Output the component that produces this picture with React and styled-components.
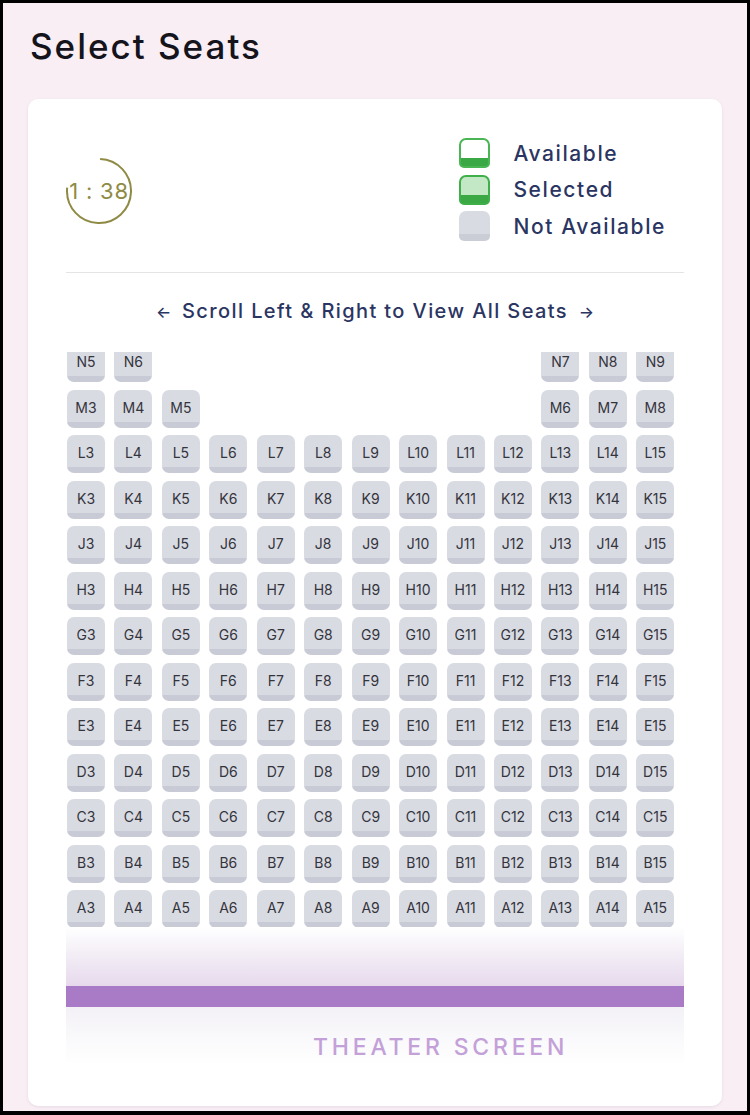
import React from "react";
import styled, { createGlobalStyle } from "styled-components";

const Global = createGlobalStyle`
  html, body { margin: 0; padding: 0; background: #000; }
  * { box-sizing: border-box; }
  body { font-family: "Inter", "Noto Sans", sans-serif; }
`;

const Frame = styled.div`
  width: 750px;
  height: 1115px;
  border: 3px solid #000;
  border-bottom-width: 4px;
  background: #f8eef4;
  display: flex;
  flex-direction: column;
  overflow: hidden;
`;

const Title = styled.h1`
  margin: 21px 0 0 27px;
  font-size: 35px;
  line-height: 44px;
  font-weight: 500;
  color: #15141c;
  letter-spacing: 2px;
`;

const Card = styled.div`
  margin: 31px 25px 0;
  height: 1007px;
  background: #fff;
  border-radius: 10px;
  box-shadow: 0 1px 3px rgba(120, 90, 120, 0.12);
  padding: 38px 38px 40px;
  display: flex;
  flex-direction: column;
`;

const Header = styled.div`
  height: 103px;
  display: flex;
  align-items: center;
  justify-content: space-between;
  padding-right: 18px;
`;

const Timer = styled.div`
  display: grid;
  width: 66px;
  height: 66px;
  margin-top: 5px;
  & > * { grid-area: 1 / 1; }
`;

const TimerText = styled.span`
  align-self: center;
  justify-self: center;
  font-size: 22px;
  letter-spacing: 0.8px;
  color: #8f8b45;
  font-weight: 400;
  white-space: nowrap;
`;

const Legend = styled.div`
  display: flex;
  flex-direction: column;
  gap: 6.5px;
  margin-top: 2px;
`;

const LegendRow = styled.div`
  display: flex;
  align-items: center;
  gap: 23px;
  height: 30px;
`;

const LegendBox = styled.div`
  width: 31px;
  height: 30px;
  border-radius: 7px 7px 5px 5px;
  ${({ $kind }) =>
    $kind === "available"
      ? `background: linear-gradient(#fff 0, #fff 70%, #3aa845 70%); border: 2px solid #49b553;`
      : $kind === "selected"
      ? `background: linear-gradient(#c2e8c5 0, #c2e8c5 70%, #3aa845 70%); border: 2px solid #3eaf49;`
      : `background: linear-gradient(#d9dbe3 0, #d9dbe3 78%, #cbcdd6 78%);`}
`;

const LegendLabel = styled.span`
  font-size: 21px;
  font-weight: 500;
  letter-spacing: 1.6px;
  color: #2b3562;
`;

const Divider = styled.div`
  height: 1px;
  background: #e4e4e6;
  margin-top: 32px;
`;

const Hint = styled.div`
  margin-top: 23px;
  text-align: center;
  font-size: 20px;
  line-height: 30px;
  font-weight: 500;
  letter-spacing: 1.4px;
  color: #2b3562;
`;

const Arrow = styled.span`
  font-size: 16px;
  letter-spacing: 0;
  margin: 0 4px;
`;

const Viewport = styled.div`
  margin-top: 25px;
  height: 575px;
  overflow: hidden;
`;

const Grid = styled.div`
  margin-top: -8px;
  margin-left: 1px;
  display: grid;
  grid-template-columns: repeat(13, 38px);
  grid-auto-rows: 38px;
  column-gap: 9.45px;
  row-gap: 7.5px;
`;

const Seat = styled.div`
  grid-column: ${({ $col }) => $col};
  border-radius: 7px;
  background: linear-gradient(#d9dbe3 0, #d9dbe3 85%, #c8cbd5 85%);
  display: flex;
  align-items: center;
  justify-content: center;
  padding-bottom: 3px;
  font-size: 14px;
  font-weight: 400;
  color: #34343c;
`;

const ScreenTop = styled.div`
  height: 59px;
  background: linear-gradient(#ffffff 0%, #f3eef6 45%, #e6d9ec 100%);
`;

const ScreenBar = styled.div`
  height: 21px;
  background: #a97ac6;
`;

const ScreenBottom = styled.div`
  height: 58px;
  background: linear-gradient(#f3f1f6, #ffffff);
  display: flex;
  align-items: flex-end;
  padding-left: 247px;
  padding-bottom: 4px;
`;

const ScreenLabel = styled.span`
  font-size: 23px;
  font-weight: 500;
  letter-spacing: 3.8px;
  color: #c3a1d8;
`;

const rows = ["L", "K", "J", "H", "G", "F", "E", "D", "C", "B", "A"];

function buildSeats() {
  const out = [];
  [[5, 1], [6, 2], [7, 11], [8, 12], [9, 13]].forEach(([num, col]) =>
    out.push({ id: `N${num}`, col })
  );
  [[3, 1], [4, 2], [5, 3], [6, 11], [7, 12], [8, 13]].forEach(([num, col]) =>
    out.push({ id: `M${num}`, col })
  );
  rows.forEach((r) => {
    for (let i = 3; i <= 15; i++) out.push({ id: `${r}${i}`, col: i - 2 });
  });
  return out;
}

const seats = buildSeats();

export default function App() {
  const r = 32;
  const c = 2 * Math.PI * r;
  return (
    <>
      <Global />
      <Frame>
        <Title>Select Seats</Title>
        <Card>
          <Header>
            <Timer>
              <svg width="66" height="66" viewBox="0 0 66 66">
                <circle
                  cx="33"
                  cy="33"
                  r={r}
                  fill="none"
                  stroke="#8f8b45"
                  strokeWidth="2"
                  strokeDasharray={`${c * 0.76} ${c}`}
                  transform="rotate(-88 33 33)"
                />
              </svg>
              <TimerText>1 : 38</TimerText>
            </Timer>
            <Legend>
              <LegendRow>
                <LegendBox $kind="available" />
                <LegendLabel>Available</LegendLabel>
              </LegendRow>
              <LegendRow>
                <LegendBox $kind="selected" />
                <LegendLabel>Selected</LegendLabel>
              </LegendRow>
              <LegendRow>
                <LegendBox $kind="na" />
                <LegendLabel>Not Available</LegendLabel>
              </LegendRow>
            </Legend>
          </Header>
          <Divider />
          <Hint>
            <Arrow>←</Arrow> Scroll Left &amp; Right to View All Seats <Arrow>→</Arrow>
          </Hint>
          <Viewport>
            <Grid>
              {seats.map((s) => (
                <Seat key={s.id} $col={s.col}>
                  {s.id}
                </Seat>
              ))}
            </Grid>
          </Viewport>
          <ScreenTop />
          <ScreenBar />
          <ScreenBottom>
            <ScreenLabel>THEATER SCREEN</ScreenLabel>
          </ScreenBottom>
        </Card>
      </Frame>
    </>
  );
}
